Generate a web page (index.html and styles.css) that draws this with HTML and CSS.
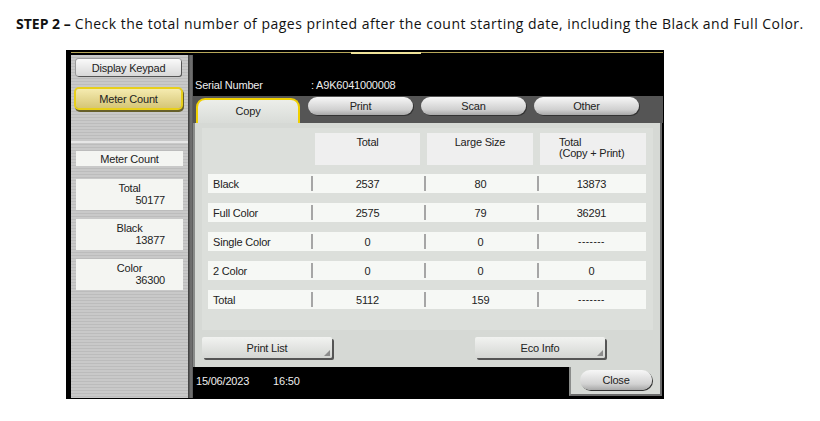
FILE: index.html
```html
<!DOCTYPE html>
<html>
<head>
<meta charset="utf-8">
<link rel="stylesheet" href="styles.css">
</head>
<body>
<p class="step"><b>STEP 2 –</b> Check the total number of pages printed after the count starting date, including the Black and Full Color.</p>
<div class="screen">
  <div class="topbar"><span class="handle"></span></div>
  <div class="body">
    <div class="left">
      <div class="left-top">
        <div class="btn keypad">Display Keypad</div>
        <div class="btn meter">Meter Count</div>
      </div>
      <div class="left-bottom">
        <div class="lbox title">Meter Count</div>
        <div class="lbox"><span>Total</span><span class="num">50177</span></div>
        <div class="lbox"><span>Black</span><span class="num">13877</span></div>
        <div class="lbox"><span>Color</span><span class="num">36300</span></div>
      </div>
    </div>
    <div class="divider"></div>
    <div class="main">
      <div class="serial"><span class="s-label">Serial Number</span><span class="s-val">: A9K6041000008</span></div>
      <div class="tabs">
        <div class="tab active">Copy</div>
        <div class="tab pill">Print</div>
        <div class="tab pill">Scan</div>
        <div class="tab pill">Other</div>
      </div>
      <div class="panel">
        <div class="inner">
          <div class="head">
            <div class="hcell w1">Total</div>
            <div class="hcell w2">Large Size</div>
            <div class="hcell w3 two">Total<br>(Copy + Print)</div>
          </div>
          <div class="row"><div class="lab">Black</div><div class="val">2537</div><div class="val">80</div><div class="val">13873</div></div>
          <div class="row"><div class="lab">Full Color</div><div class="val">2575</div><div class="val">79</div><div class="val">36291</div></div>
          <div class="row"><div class="lab">Single Color</div><div class="val">0</div><div class="val">0</div><div class="val dash">-------</div></div>
          <div class="row"><div class="lab">2 Color</div><div class="val">0</div><div class="val">0</div><div class="val">0</div></div>
          <div class="row"><div class="lab">Total</div><div class="val">5112</div><div class="val">159</div><div class="val dash">-------</div></div>
        </div>
        <div class="actions">
          <div class="sbtn">Print List</div>
          <div class="sbtn">Eco Info</div>
        </div>
      </div>
      <div class="bottom">
        <div class="clock"><span>15/06/2023</span><span>16:50</span></div>
        <div class="close-area"><div class="close">Close</div></div>
      </div>
    </div>
  </div>
</div>
</body>
</html>
```
FILE: styles.css
```css
* { box-sizing: border-box; }
body {
  margin: 0;
  background: #fff;
  font-family: "Liberation Sans", Arial, sans-serif;
}
.step {
  margin: 0;
  padding: 14px 0 0 16px;
  height: 50px;
  font-family: "Open Sans", sans-serif;
  font-size: 14px;
  color: #111;
  letter-spacing: 0.48px;
  white-space: nowrap;
}
.step b { font-weight: 700; letter-spacing: 0; }

.screen {
  margin-left: 66px;
  width: 598px;
  height: 349px;
  background: #000;
  display: flex;
  flex-direction: column;
  padding: 0 0 1px 5px;
  font-size: 11px;
  letter-spacing: -0.2px;
  color: #222;
}
.topbar {
  height: 5px;
  position: relative;
  border-top: 2px solid #000;
}
.topbar::before {
  content: "";
  display: block;
  height: 1px;
  background: #b8a85a;
  margin-right: 1px;
}
.handle {
  position: absolute;
  left: 280px;
  top: 0;
  width: 70px;
  height: 2px;
  background: #efe39a;
}
.body {
  flex: 1;
  display: flex;
}
.left {
  width: 117px;
  display: flex;
  flex-direction: column;
  background: repeating-linear-gradient(180deg, #c9c9c9 0 2px, #bcbcbc 2px 3px);
}
.left-top {
  height: 88px;
  padding: 4px 0 0 5px;
  border-bottom: 2px solid #e6e6e6;
  display: flex;
  flex-direction: column;
  gap: 13px;
}
.btn {
  width: 105px;
  height: 17px;
  border-radius: 3px;
  display: flex;
  align-items: center;
  justify-content: center;
  box-shadow: 1px 1px 0 #555, 0 0 0 1px #9a9a9a;
  background: linear-gradient(#fafafa, #d8d8d8);
}
.btn.meter {
  height: 19px;
  background: linear-gradient(#f5ebb0, #d6c676);
  box-shadow: 0 0 0 2px #e8cf1a, 1px 2px 0 2px #665f2a;
}
.left-bottom {
  padding: 8px 0 0 5px;
  display: flex;
  flex-direction: column;
  gap: 9px;
}
.lbox {
  width: 107px;
  background: #f4f5f2;
  display: flex;
  flex-direction: column;
  align-items: center;
  padding-top: 3px;
  height: 31px;
  line-height: 12px;
}
.lbox.title {
  height: 15px;
  padding-top: 1px;
  margin-bottom: 4px;
  justify-content: center;
}
.lbox .num {
  align-self: flex-end;
  padding-right: 18px;
}
.divider {
  width: 5px;
  background: linear-gradient(90deg, #3a3a3a, #777 60%, #555);
}
.main {
  flex: 1;
  display: flex;
  flex-direction: column;
}
.serial {
  height: 41px;
  color: #eee;
  display: flex;
  align-items: flex-end;
  padding: 0 0 5px 2px;
}
.s-label { width: 116px; }
.tabs {
  height: 27px;
  background: #555;
  display: flex;
  align-items: flex-start;
  padding: 1px 0 0 3px;
  gap: 8px;
  margin-right: 1px;
}
.tab {
  display: flex;
  align-items: center;
  justify-content: center;
  color: #222;
}
.tab.active {
  width: 104px;
  height: 26px;
  margin-top: 1px;
  border: 2px solid #f0d000;
  border-bottom: none;
  border-radius: 9px 9px 0 0;
  background: linear-gradient(#eceeea, #d8dbd7);
  padding-bottom: 3px;
}
.tab.pill {
  width: 105px;
  height: 18px;
  border-radius: 10px;
  background: linear-gradient(#f7f7f7, #d0d0d0 70%, #a8a8a8);
  box-shadow: 1px 1px 0 #333;
}
.panel {
  height: 244px;
  background: #d6d9d5;
  border-left: 2px solid #8a8c8a;
  border-right: 2px solid #6a6a6a;
  margin-right: 2px;
  padding: 5px 0 0 7px;
}
.inner {
  width: 451px;
  height: 202px;
  background: #dcdfdb;
  padding: 5px 0 0 6px;
}
.head {
  display: flex;
  gap: 7px;
  padding-left: 107px;
  height: 32px;
}
.hcell {
  background: #efefef;
  text-align: center;
  padding-top: 4px;
  line-height: 11px;
}
.hcell.w1 { width: 105px; }
.hcell.w2 { width: 106px; }
.hcell.w3 { width: 106px; text-align: left; padding-left: 19px; }
.row {
  margin-top: 10px;
  width: 438px;
  height: 19px;
  background: #f6f8f5;
  display: grid;
  grid-template-columns: 103px 113px 113px 109px;
  align-items: center;
}
.head + .row { margin-top: 9px; }
.lab { padding-left: 5px; }
.val {
  height: 15px;
  border-left: 2px solid #a6a6a6;
  display: flex;
  align-items: center;
  justify-content: center;
  padding-right: 2px;
}
.val.dash { letter-spacing: 0.5px; font-size: 10px; }
.actions {
  display: flex;
  justify-content: space-between;
  width: 403px;
  margin-top: 7px;
}
.sbtn {
  width: 130px;
  height: 21px;
  border-radius: 2px;
  background: linear-gradient(#f2f3f1, #d4d6d3);
  box-shadow: 2px 2px 0 #555;
  display: flex;
  align-items: center;
  justify-content: center;
  position: relative;
}
.sbtn::after {
  content: "";
  position: absolute;
  right: 2px;
  bottom: 2px;
  border: 3px solid transparent;
  border-right-color: #8c8c8c;
  border-bottom-color: #8c8c8c;
}
.bottom {
  flex: 1;
  display: flex;
}
.clock {
  flex: 1;
  color: #eee;
  padding: 8px 0 0 3px;
  display: flex;
  gap: 24px;
}
.close-area {
  width: 93px;
  height: 29px;
  margin-right: 2px;
  background: #d6d9d5;
  border-right: 2px solid #6a6a6a;
  border-bottom: 2px solid #6a6a6a;
  border-left: 2px solid #8a8c8a;
  padding: 3px 0 0 9px;
}
.close {
  width: 72px;
  height: 20px;
  border-radius: 10px;
  background: linear-gradient(#f7f7f7, #d2d2d2 70%, #a8a8a8);
  box-shadow: 1px 1px 0 #333;
  display: flex;
  align-items: center;
  justify-content: center;
}
```
